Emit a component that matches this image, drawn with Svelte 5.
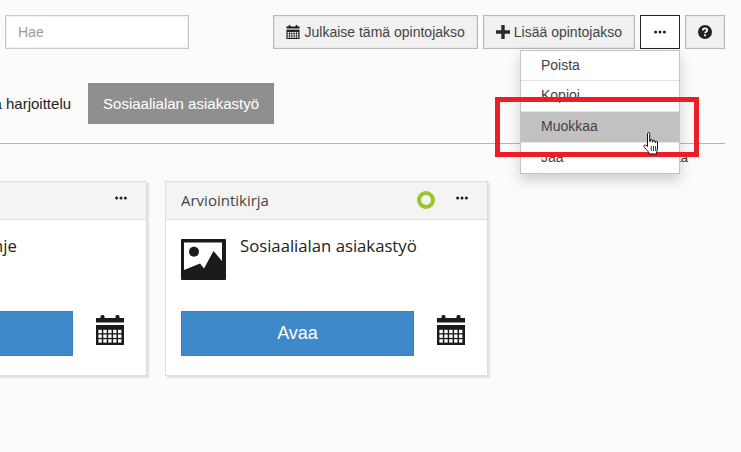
<script>
    const menuItems = ['Poista', 'Kopioi', 'Muokkaa', 'Jaa'];
    const cards = [
        { type: 'Arviointikirja', title: 'Työpaikan ohje', status: false },
        { type: 'Arviointikirja', title: 'Sosiaalialan asiakastyö', status: true }
    ];
    const calCols = [0, 1, 2, 3, 4];
    const calRows = [0, 1, 2];
</script>

{#snippet calendar(cls)}
    <svg class={cls} viewBox="0 0 28 30" aria-hidden="true">
        <path d="M0 3h4.500V1.500a1.500 1.500 0 0 1 1.500-1.500h1a1.500 1.500 0 0 1 1.500 1.500V3h11V1.500a1.500 1.500 0 0 1 1.500-1.500h1a1.500 1.500 0 0 1 1.500 1.500V3h4.500v4.500H0z" fill="#1c1b19" />
        <rect y="10" width="28" height="20" fill="#1c1b19" />
        {#each calRows as r}
            {#each calCols as c}
                <rect x={2.4 + c * 4.9} y={14.8 + r * 4.7} width="3.4" height="3.4" fill="#fff" />
            {/each}
        {/each}
    </svg>
{/snippet}

{#snippet dots()}
    <svg class="dots" viewBox="0 0 12 4" aria-hidden="true">
        <circle cx="1.600" cy="2" r="1.500" />
        <circle cx="6" cy="2" r="1.500" />
        <circle cx="10.400" cy="2" r="1.500" />
    </svg>
{/snippet}

<div class="page">
    <header class="topbar">
        <input class="search" type="text" placeholder="Hae" />
        <div class="actions">
            <button class="btn">{@render calendar('cal-small')} Julkaise tämä opintojakso</button>
            <button class="btn">
                <svg class="plus" viewBox="0 0 14 14" aria-hidden="true">
                    <path d="M5.300 0h3.400v5.300H14v3.400H8.700V14H5.300V8.700H0V5.300h5.300z" fill="#2b2a28" />
                </svg>
                Lisää opintojakso
            </button>
            <div class="more-wrap">
                <button class="btn more">{@render dots()}</button>
                <ul class="menu">
                    {#each menuItems as item}
                        <li class:hover={item === 'Muokkaa'}>{item}</li>
                    {/each}
                </ul>
            </div>
            <button class="btn help">
                <svg class="question" viewBox="0 0 14 14" aria-hidden="true">
                    <circle cx="7" cy="7" r="7" fill="#23211f" />
                    <path d="M4.800 5.400C4.900 4.100 5.800 3.400 7 3.400s2.200.7 2.200 1.800c0 1.500-2.100 1.500-2.100 3" fill="none" stroke="#fff" stroke-width="1.700" />
                    <rect x="6.100" y="9.400" width="1.900" height="1.800" fill="#fff" />
                </svg>
            </button>
        </div>
    </header>

    <nav class="tabs">
        <div class="tab-list">
            <span class="tab">Alkava harjoittelu</span>
            <span class="tab active">Sosiaalialan asiakastyö</span>
        </div>
    </nav>

    <div class="sub-row"><span>Suodata</span></div>

    <section class="cards">
        {#each cards as card}
            <article class="card">
                <div class="card-head">
                    <span class="card-type">{card.type}</span>
                    {#if card.status}<span class="ring"></span>{/if}
                    {@render dots()}
                </div>
                <div class="card-body">
                    <div class="card-info">
                        <svg class="picture" viewBox="0 0 45 41" aria-hidden="true">
                            <rect width="45" height="41" rx="1" fill="#1c1b19" />
                            <rect x="3" y="3.500" width="38" height="34" fill="#fff" />
                            <circle cx="13" cy="12.700" r="5" fill="#1c1b19" />
                            <path d="M3 31l16-6.500 4 5L32.500 12 41 22v19H3z" fill="#1c1b19" />
                        </svg>
                        <p class="card-title">{card.title}</p>
                    </div>
                    <div class="card-actions">
                        <button class="open">Avaa</button>
                        {@render calendar('cal-large')}
                    </div>
                </div>
            </article>
        {/each}
    </section>
</div>

<div class="highlight"></div>
<svg class="cursor" viewBox="0 0 17 23" aria-hidden="true">
    <path d="M4.500 1.500c0-1.300 2.200-1.300 2.200 0v8h.6V8c0-1 2-1 2 0v2h.6V9c0-1 2-1 2 0v1.500h.6V10c0-1 2-1 2 0v6c0 2-.6 3-1 5v1H6v-1c-1-2-2-3-4-5-1-1-1.500-2-.8-2.600.7-.7 2-.2 3.300 1.100z" fill="#fff" stroke="#111" stroke-width="1" stroke-linejoin="round" />
    <path d="M8.300 14v5M10.500 14v5M12.600 14v5" stroke="#111" stroke-width=".8" fill="none" />
</svg>

<style>
    :global(body) {
        background: #fbfbfb;
        overflow: hidden;
        font-family: "Liberation Sans", Arial, sans-serif;
    }

    .page {
        width: 725px;
        height: 452px;
        padding-top: 15px;
        box-sizing: border-box;
        overflow: hidden;
    }

    .topbar {
        display: flex;
        justify-content: space-between;
        height: 34px;
        padding-left: 5px;
    }

    .search {
        width: 184px;
        box-sizing: border-box;
        border: 1px solid #c8c8c8;
        box-shadow: inset 0 0 0 1px #f0f0f0;
        background: #fff;
        padding: 0 12px;
        font: 14px "Liberation Sans", Arial, sans-serif;
        outline: none;
    }

    .search::placeholder {
        color: #9a9a9a;
    }

    .actions {
        display: flex;
        gap: 5px;
    }

    .btn {
        height: 34px;
        box-sizing: border-box;
        border: 1px solid #b8b8b8;
        box-shadow: inset 0 0 0 1px #e6e6e6;
        background: #f1f1f1;
        color: #444;
        padding: 0 12px;
        font: 14px "Liberation Sans", Arial, sans-serif;
        display: flex;
        align-items: center;
        gap: 5px;
        white-space: nowrap;
    }

    .cal-small {
        width: 14px;
        height: 14px;
        flex: none;
    }

    .plus {
        width: 14px;
        height: 14px;
        margin-right: -1px;
    }

    .dots {
        width: 12px;
        height: 4px;
        flex: none;
        fill: #23211f;
    }

    .more-wrap {
        position: relative;
    }

    .more {
        width: 40px;
        justify-content: center;
        padding: 0;
        background: #fff;
        border: 1px solid #222;
        box-shadow: none;
    }

    .help {
        width: 40px;
        justify-content: center;
        padding: 0;
    }

    .question {
        width: 14px;
        height: 14px;
    }

    .menu {
        position: absolute;
        top: 35px;
        left: -120px;
        width: 160px;
        box-sizing: border-box;
        margin: 0;
        padding: 0;
        list-style: none;
        background: #fff;
        border: 1px solid #c4c4c4;
        box-shadow: 0 6px 12px rgba(0, 0, 0, 0.18);
        font-size: 14px;
        color: #444;
        z-index: 2;
    }

    .menu li {
        height: 31px;
        box-sizing: border-box;
        line-height: 29px;
        padding-left: 20px;
        border-bottom: 1px solid #e4e4e4;
    }

    .menu li:first-child {
        height: 30px;
    }

    .menu li:last-child {
        height: 30px;
        border-bottom: none;
    }

    .menu li.hover {
        background: #c1c1c1;
    }

    .tabs {
        margin-top: 34px;
        padding-bottom: 19px;
        border-bottom: 1px solid #b5b5b5;
    }

    .tab-list {
        display: flex;
        justify-content: flex-end;
        width: 274px;
    }

    .tab {
        flex: none;
        height: 41px;
        line-height: 41px;
        padding: 0 15px;
        font-size: 15px;
        color: #222;
        white-space: nowrap;
        margin-right: 2px;
    }

    .tab.active {
        background: #8f8f8f;
        color: #fff;
        margin-right: 0;
    }

    .sub-row {
        display: flex;
        justify-content: flex-end;
        padding-right: 37px;
        height: 37px;
        font-size: 13px;
        line-height: 28px;
        color: #333;
    }

    .cards {
        display: flex;
        justify-content: flex-end;
        gap: 18px;
        width: 488px;
    }

    .card {
        flex: none;
        width: 323px;
        height: 195px;
        box-sizing: border-box;
        background: #fff;
        border: 1px solid #dedede;
        box-shadow: 2px 2px 1px #e4e4e4;
        font-family: "Open Sans", sans-serif;
    }

    .card-head {
        display: flex;
        align-items: center;
        height: 38px;
        padding: 0 19px 2px 15px;
        box-sizing: border-box;
        background: #f4f4f4;
        border-bottom: 1px solid #dedede;
    }

    .card-head .dots {
        margin-bottom: 4px;
    }

    .card-type {
        font-size: 15px;
        color: #444;
        margin-right: auto;
    }

    .ring {
        width: 18px;
        height: 18px;
        box-sizing: border-box;
        border: 4px solid #9bc52a;
        border-radius: 50%;
        margin-right: 21px;
    }

    .card-body {
        padding: 19px 22px 0 15px;
    }

    .card-info {
        display: flex;
        gap: 14px;
        height: 72px;
    }

    .picture {
        width: 45px;
        height: 41px;
        flex: none;
    }

    .card-title {
        margin: -4px 0 0;
        font-size: 16.700px;
        line-height: 22px;
        color: #222;
    }

    .card-actions {
        display: flex;
        align-items: flex-start;
        justify-content: space-between;
    }

    .open {
        width: 233px;
        height: 45px;
        border: 1px solid #3a80c0;
        background: #3f88c9;
        color: #fff;
        font: 18px "Liberation Sans", Arial, sans-serif;
    }

    .cal-large {
        width: 28px;
        height: 30px;
        flex: none;
        margin-top: 4px;
    }

    /* annotation on top of the screenshot */
    .highlight {
        position: absolute;
        left: 495px;
        top: 97px;
        width: 204px;
        height: 60px;
        box-sizing: border-box;
        border: 5px solid #ee1c25;
        z-index: 3;
    }

    .cursor {
        position: absolute;
        left: 643px;
        top: 132px;
        width: 17px;
        height: 23px;
        z-index: 4;
    }
</style>
